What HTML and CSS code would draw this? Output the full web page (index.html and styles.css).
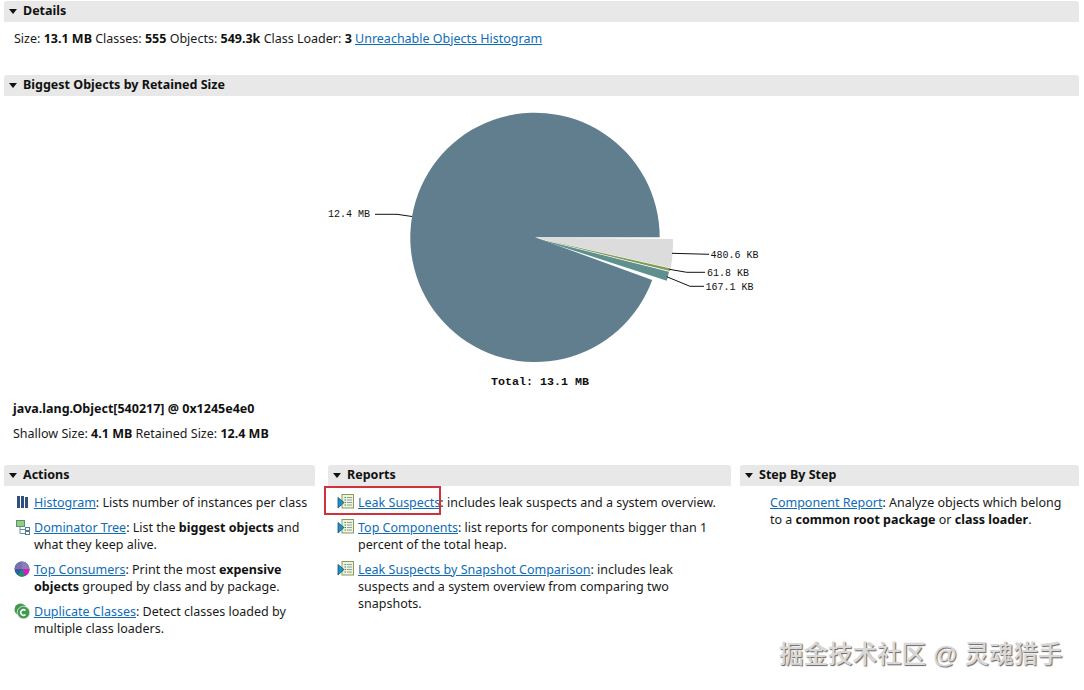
FILE: index.html
```html
<!DOCTYPE html>
<html lang="en">
<head>
<meta charset="utf-8">
<title>Overview</title>
<link rel="stylesheet" href="styles.css">
</head>
<body>
<svg class="defs" width="0" height="0" aria-hidden="true">
  <defs>
    <symbol id="report" viewBox="0 0 17 16">
      <rect x="5" y=".5" width="11.500" height="13.500" fill="#eef3dc" stroke="#8a9a5e"/>
      <path d="M7.500 3.500h1.500M7.500 6h1.500M7.500 8.500h1.500M7.500 11h1.500" stroke="#3f8a6a"/>
      <path d="M10 3.500h5M10 6h5M10 8.500h5M10 11h5" stroke="#8fa0a0"/>
      <path d="M1 3.500 L7 8.500 L1 14 Z" fill="#1f8fc8" stroke="#14506f" stroke-width=".8"/>
    </symbol>
  </defs>
</svg>
<main class="page">
  <section class="section">
    <h2 class="head"><span class="caret"></span>Details</h2>
    <p class="details">Size: <b>13.1 MB</b> Classes: <b>555</b> Objects: <b>549.3k</b> Class Loader: <b>3</b> <a href="#">Unreachable Objects Histogram</a></p>
  </section>
  <section class="section biggest">
    <h2 class="head"><span class="caret"></span>Biggest Objects by Retained Size</h2>
    <svg class="chart" width="1075" height="293" viewBox="4 96 1075 293">
      <path d="M535 237.300 L659.700 237.300 A124.700 124.700 0 1 0 652.200 279.950 Z" fill="#607e8e"/>
      <path d="M536.500 237.800 L673 239 Q673.200 254 670.800 268 Z" fill="#dcdcdc"/>
      <path d="M536.500 238 L670.600 268.600 L669.800 271 Z" fill="#7f9a55"/>
      <path d="M536.500 238.400 L669 271.800 L666.800 280.800 L663 279.600 Z" fill="#5f8f8f"/>
      <g class="leader">
        <path d="M375 214.300 L397 214.300 L412 216.500"/>
        <path d="M672 253.300 L709 254.300"/>
        <path d="M669.300 269.300 L686.700 272.300 L705 272.300"/>
        <path d="M666.700 276.700 L690 286.300 L704 286.300"/>
      </g>
      <text class="label" x="328" y="217">12.4 MB</text>
      <text class="label" x="710.500" y="258">480.6 KB</text>
      <text class="label" x="707" y="276">61.8 KB</text>
      <text class="label" x="705.500" y="290">167.1 KB</text>
      <text class="total" x="491" y="385">Total: 13.1 MB</text>
    </svg>
    <p class="obj"><b>java.lang.Object[540217] @ 0x1245e4e0</b></p>
    <p class="sizes">Shallow Size: <b>4.1 MB</b> Retained Size: <b>12.4 MB</b></p>
  </section>
  <div class="columns">
    <section class="section col-actions">
      <h2 class="head"><span class="caret"></span>Actions</h2>
      <ul class="list">
        <li>
          <svg class="icon" viewBox="0 0 16 16"><path d="M3 2h3v12H3zM7 2h3v12H7zM11 3h3v11h-3z" fill="#2f4f7f"/></svg>
          <span><a href="#">Histogram</a>: Lists number of instances per class</span>
        </li>
        <li>
          <svg class="icon" viewBox="0 0 16 16"><rect x="2.500" y="1.500" width="8" height="6" fill="#8fd07f" stroke="#5f8f6f"/><path d="M6 7.500v7h5M6 10.500h5" fill="none" stroke="#6f8f9f"/><rect x="11.500" y="8.500" width="4" height="3" fill="#fff" stroke="#4f7fa0"/><rect x="11.500" y="12.500" width="4" height="3" fill="#fff" stroke="#4f7fa0"/></svg>
          <span><a href="#">Dominator Tree</a>: List the <b>biggest objects</b> and what they keep alive.</span>
        </li>
        <li>
          <svg class="icon" viewBox="0 0 16 16"><circle cx="8" cy="8" r="7.500" fill="#2f5f9f"/><path d="M8 8L8 .5A7.500 7.500 0 0 0 .5 8Z" fill="#7a6fb0"/><path d="M8 8L15.500 8A7.500 7.500 0 0 1 11 15Z" fill="#d020c0"/><path d="M8 8L11 15A7.500 7.500 0 0 1 4 14.500Z" fill="#1f8f6f"/><path d="M8 8L8 .5A7.500 7.500 0 0 1 15.500 8Z" fill="#8a80b8"/></svg>
          <span><a href="#">Top Consumers</a>: Print the most <b>expensive objects</b> grouped by class and by package.</span>
        </li>
        <li>
          <svg class="icon" viewBox="0 0 16 16"><circle cx="6.500" cy="6.500" r="6" fill="#3f9a4f"/><circle cx="9.500" cy="9.500" r="6.300" fill="#3f9a4f" stroke="#dff0df" stroke-width=".8"/><path d="M11.500 7.500A2.800 2.800 0 1 0 11.500 11.500" fill="none" stroke="#fff" stroke-width="1.600"/></svg>
          <span><a href="#">Duplicate Classes</a>: Detect classes loaded by multiple class loaders.</span>
        </li>
      </ul>
    </section>
    <section class="section col-reports">
      <h2 class="head"><span class="caret"></span>Reports</h2>
      <ul class="list">
        <li>
          <svg class="icon wide"><use href="#report"/></svg>
          <span><a href="#">Leak Suspects</a>: includes leak suspects and a system overview.</span>
        </li>
        <li>
          <svg class="icon wide"><use href="#report"/></svg>
          <span><a href="#">Top Components</a>: list reports for components bigger than 1 percent of the total heap.</span>
        </li>
        <li>
          <svg class="icon wide"><use href="#report"/></svg>
          <span><a href="#">Leak Suspects by Snapshot Comparison</a>: includes leak suspects and a system overview from comparing two snapshots.</span>
        </li>
      </ul>
      <div class="highlight"></div>
    </section>
    <section class="section col-step">
      <h2 class="head"><span class="caret"></span>Step By Step</h2>
      <p class="step"><a href="#">Component Report</a>: Analyze objects which belong to a <b>common root package</b> or <b>class loader</b>.</p>
    </section>
  </div>
</main>
<div class="watermark">掘金技术社区 @ 灵魂猎手</div>
</body>
</html>
```
FILE: styles.css
```css
* { box-sizing: border-box; }
html, body { height: 100%; }
body {
  margin: 0;
  background: #fff;
  color: #1a1a1a;
  font: 12.500px/17px "Noto Sans", "Noto Sans CJK SC", sans-serif;
  overflow: hidden;
  position: relative;
}
.defs { position: absolute; }
.page { padding: 1px 5px 0 4px; }
.section { min-width: 0; }
.head {
  display: flex;
  align-items: center;
  height: 21px;
  margin: 0;
  padding: 0 0 2px 5px;
  gap: 5px;
  background: #e8e8e8;
  border-radius: 3px 3px 0 0;
  color: #111;
  font-size: 12.500px;
  font-weight: 700;
}
.caret {
  width: 0;
  height: 0;
  margin-top: 2px;
  margin-right: 1px;
  border-left: 4.500px solid transparent;
  border-right: 4.500px solid transparent;
  border-top: 5px solid #111;
}
a { color: #0f6cb8; text-decoration: underline; }
b { color: #111; }
p { margin: 0; }
.details { padding: 8px 10px 0; height: 53px; }
.chart { display: block; }
.leader path { fill: none; stroke: #111; stroke-width: 1; }
.label, .total { font-family: "Liberation Mono", monospace; fill: #111; }
.label { font-size: 10px; }
.total { font-size: 11.670px; font-weight: 700; }
.obj { padding: 11px 9px 0; }
.sizes { padding: 8px 9px 0; }
.columns {
  display: flex;
  margin-top: 23px;
}
.col-actions { flex: none; width: 311px; margin-right: 13px; }
.col-reports { flex: none; width: 403px; margin-right: 9px; position: relative; }
.col-step { flex: none; width: 339px; }
.list { list-style: none; margin: 0; padding: 8px 2px 0 10px; }
.list li { display: flex; gap: 4px; margin-bottom: 8px; }
.icon { flex: none; width: 16px; height: 16px; }
.icon.wide { width: 17px; }
.col-reports .list { padding: 8px 8px 0 9px; }
.highlight {
  position: absolute;
  left: -4px;
  top: 21px;
  width: 117px;
  height: 29px;
  border: 2px solid #d0313a;
}
.step { padding: 8px 12px 0 30px; }
.watermark {
  position: absolute;
  left: 779px;
  top: 640px;
  color: #d8d8d8;
  font: 500 24.500px/30px "Liberation Sans", "Noto Sans CJK SC", sans-serif;
  text-shadow: 1px 1px 1px #666;
  white-space: nowrap;
}
```
